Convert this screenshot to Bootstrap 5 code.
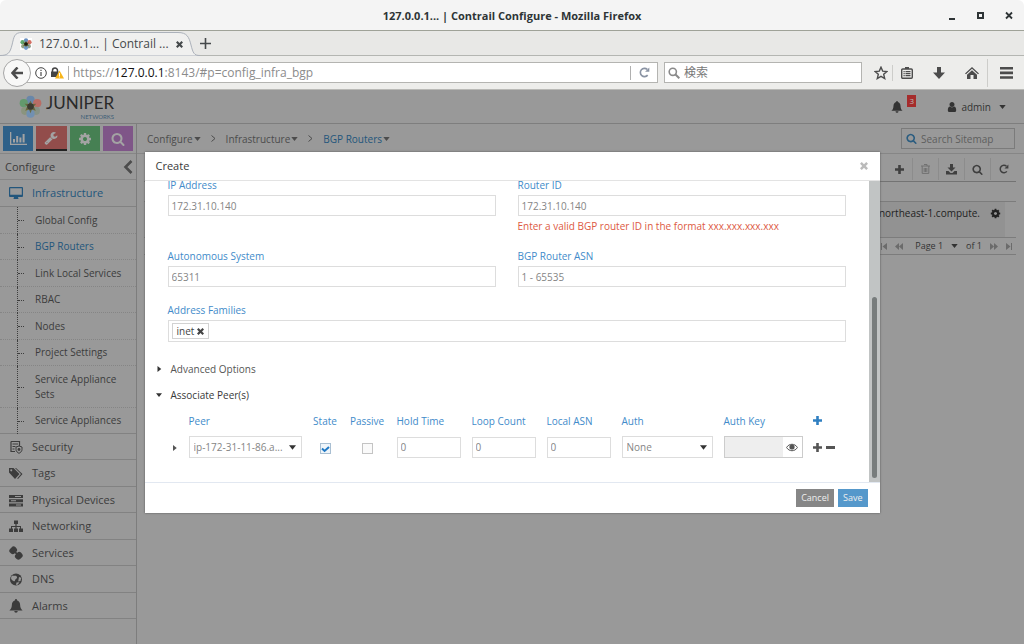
<!DOCTYPE html>
<html lang="en">
<head>
<meta charset="utf-8">
<meta name="viewport" content="width=device-width, initial-scale=1">
<title>127.0.0.1... | Contrail Configure - Mozilla Firefox</title>
<link href="https://cdn.jsdelivr.net/npm/bootstrap@5.3.0/dist/css/bootstrap.min.css" rel="stylesheet">
<style>
:root { --ui: "Open Sans", "Noto Sans", sans-serif; --chrome: "Open Sans", "Noto Sans CJK JP", sans-serif; --blue: #428bca; }
body { font: 10px/16px var(--ui); color: #3c3c3c; background: #fff; }
button, input, select { font: inherit; color: inherit; }
.plain-btn { border: 0; background: none; padding: 0; line-height: 1; display: inline-flex; align-items: center; justify-content: center; }
svg { display: block; flex: none; fill: currentColor; }
a { color: inherit; text-decoration: none; }

/* window and browser chrome */
.titlebar { height: 31px; background: #f4f4f4; border-bottom: 1px solid #9fa298; border-radius: 6px 6px 0 0; font: 700 11px/31px var(--chrome); color: #2e3436; display: grid; grid-template-columns: 1fr auto 1fr; }
.win-btns { gap: 17px; padding-right: 9px; }
.tabstrip { height: 25px; background: #e8e8e6; border-bottom: 1px solid #b4b6b2; font: 12px/16px var(--chrome); color: #45494b; }
.page-tab { width: 188px; height: 25px; margin-left: 4px; padding: 2px 14px 0 16px; gap: 7px; position: relative; }
.page-tab > .tab-shape { position: absolute; left: -4px; top: 0; z-index: 0; }
.page-tab > :not(.tab-shape) { position: relative; }
.toolrow { height: 34px; background: #ededeb; border-bottom: 1px solid #b9b9b6; padding: 0 11px 0 3px; font: 12px/16px var(--chrome); color: #4c4c4c; }
.back-btn { width: 28px; height: 28px; border: 1px solid #a5a5a5; border-radius: 50%; background: #f8f8f7; z-index: 1; }
.urlbox { height: 21px; margin-left: -6px; padding: 0 7px 0 9px; background: #fff; border: 1px solid #b4b4b1; }
.urlbox .divider { width: 1px; height: 14px; background: #b0b0b0; }
.address { color: #8b8b8b; white-space: nowrap; }
.address b { font-weight: 400; color: #111; }
.findbox { width: 198px; height: 21px; margin-left: 6px; padding-left: 3px; background: #fff; border: 1px solid #b4b4b1; color: #8a8a8a; }
.findbox input, .sitemap input { border: 0; background: none; outline: 0; padding: 0; min-width: 0; width: 100%; }
.findbox input::placeholder { color: #777; }
.bar-sep { width: 1px; height: 16px; background: #cdcdca; }

/* dimmed application */
.app { background: #999; position: relative; }
.apphead { height: 34px; border-bottom: 1px solid #7e7e7e; padding: 0 18px 0 19px; color: #333; }
.brand-name { font: 400 17px/20px Lato, sans-serif; color: #2a2a2a; }
.brand-sub { font: 400 6px/8px Lato, sans-serif; color: #3f5f78; }
.bell-btn { margin-right: 44px; }
.alert-count { position: absolute; left: 16px; top: -6px; background: #a52c2c; color: #bbb; font-size: 8px; line-height: 12px; padding: 0 2px; }
.side { width: 137px; border-right: 1px solid #7d7d7d; font-size: 11px; }
.switcher { height: 30px; padding: 2px 3px; gap: 3px; border-bottom: 1px solid #868686; }
.switcher button { flex: 1; height: 25px; color: #a3a3a3; }
.switcher .sw-b { background: #2f6189; } .switcher .sw-r { background: #924d4b; border-bottom: 2px solid #222; }
.switcher .sw-g { background: #468053; } .switcher .sw-p { background: #7f5688; }
.side-title { height: 26px; border-bottom: 1px solid #868686; padding: 0 3px 0 5px; }
.side-main { display: flex; align-items: center; height: 26px; border-bottom: 1px solid #828282; padding-left: 9px; gap: 9px; }
.side-main:nth-child(even), .side-title + .side-main { height: 27px; }
.side-main svg { width: 14px; height: 14px; }
.side-main.on { color: #23567c; }
.side-sub { position: relative; border-bottom: 1px dotted #858585; padding: 5px 8px 5px 35px; font-size: 10px; line-height: 15px; display: block; }
.side-sub:nth-child(odd) { padding-top: 6px; }
.side-sub::before { content: ""; position: absolute; left: 17px; top: 0; bottom: -1px; border-left: 1px dotted #3d3d3d; }
.side-sub::after { content: ""; position: absolute; left: 18px; top: 50%; width: 6px; border-top: 1px dotted #3d3d3d; }
.side-sub.on { color: #23567c; }
.side-sub:last-child { border-bottom: 1px solid #828282; }
.crumbs { height: 30px; border-bottom: 1px solid #868686; padding: 0 9px 0 10px; gap: 10px; color: #4c4c4c; }
.crumbs a { display: flex; align-items: center; gap: 1px; }
.crumbs .on span { color: #23567c; }
.sitemap { width: 114px; height: 21px; border: 1px solid #7b7b7b; padding: 0 4px; gap: 4px; }
.sitemap input::placeholder { color: #5e5e5e; opacity: 1; }
.panel-area { padding: 0 8px 0 7px; }
.grid-tools { height: 28px; border-bottom: 1px solid #737373; color: #3f3f3f; padding-top: 3px; }
.grid-tools button { width: 26px; height: 22px; border-left: 1px solid #8c8c8c; }
.grid-tools button:first-child { border: 0; }
.grid-gap { height: 20px; border-bottom: 1px solid #7c7c7c; }
.grid-line { height: 35px; margin-right: 11px; padding: 3px 4px 0 0; background: #929292; color: #222; gap: 10px; }
.pager { height: 18px; border-top: 1px solid #7c7c7c; border-bottom: 1px solid #7c7c7c; font-size: 9px; color: #333; gap: 8px; }

/* dialog */
.dlg-layer { position: absolute; left: 0; right: 0; top: 62px; z-index: 5; }
.dlg { max-width: 735px; margin: 0 auto; background: #fff; box-shadow: 0 0 2px #555; color: #555; }
.dlg-head { height: 29px; border-bottom: 1px solid #e3e3e3; padding: 0 12px 0 11px; color: #393939; font-size: 11px; }
.dlg-body { overflow: hidden; min-height: 301px; }
.dlg-form { margin-top: -4px; padding: 0 23px 0 23px; flex: 1; min-width: 0; }
.two-up { display: grid; grid-template-columns: 1fr 1fr; column-gap: 22px; margin-bottom: 15px; }
.dlg label { color: var(--blue); display: block; }
.two-up label, .wide label { margin-bottom: 2px; }
.wide { margin-bottom: 14px; }
.fld { display: block; width: 100%; height: 21px; border: 1px solid #ddd; border-radius: 0; background: #fff; padding: 0 3px; color: #858585; outline: 0; }
.err { color: #dd5a43; margin-top: 4px; line-height: 13px; }
.tagbox { height: 22px; border: 1px solid #ddd; padding: 0 3px; }
.chip { border: 1px solid #d2d2d2; height: 16px; line-height: 14px; padding: 0 4px; gap: 3px; color: #444; }
.fold { display: flex; align-items: center; height: 26px; margin-left: -12px; gap: 9px; border: 0; background: none; padding: 0; }
.fold svg { width: 6px; height: 6px; color: #333; }
.peers { table-layout: fixed; width: 100%; border-collapse: collapse; }
.peers th { height: 26px; padding: 0; font-weight: 400; white-space: nowrap; }
.peers td { height: 26px; padding: 0; }
.peers .mid { text-align: center; padding-right: 12px; }
.peers .fld { width: calc(100% - 11px); }
.peers select.fld { appearance: none; height: 22px; padding: 0 16px 0 4px; background: #fff url("data:image/svg+xml,%3Csvg xmlns='http://www.w3.org/2000/svg' viewBox='0 0 8 5'%3E%3Cpath d='M0 0h8L4 5z' fill='%23333'/%3E%3C/svg%3E") no-repeat right 5px center / 7px 5px; text-overflow: ellipsis; }
.tick { appearance: none; width: 11px; height: 11px; border: 1px solid #c4c4c4; background: #fafafa; margin: 0; display: inline-block; vertical-align: middle; }
.tick:checked { border-color: #a9bfd2; background: #eff5fa url("data:image/svg+xml,%3Csvg xmlns='http://www.w3.org/2000/svg' viewBox='0 0 9 9'%3E%3Cpath d='M1 4.5 3.6 7 8 3' fill='none' stroke='%231f78c4' stroke-width='2'/%3E%3C/svg%3E") center / 9px 9px; }
.keybox { height: 22px; border: 1px solid #ccc; margin-right: 10px; }
.keybox input { border: 0; background: #eee; width: 58px; height: 20px; outline: 0; }
.scroll-track { width: 11px; background: #c1c4c4; padding: 116px 3px 4px; }
.scroll-thumb { width: 5px; flex: 1; border-radius: 3px; background: #777c7c; }
.dlg-foot { border-top: 1px solid #e2e8f1; height: 31px; padding: 0 12px; gap: 4px; }
.act { border: 0; border-radius: 0; color: #eee; background: #868686; font-size: 9px; line-height: 18px; height: 18px; padding: 0 5px; }
.act.go { background: #5598cb; }
</style>
</head>
<body class="d-flex flex-column min-vh-100">
<svg class="d-none">
  <symbol id="cog" viewBox="0 0 1792 1792"><path d="M1152 896q0-106-75-181t-181-75-181 75-75 181 75 181 181 75 181-75 75-181zm512-109v222q0 12-8 23t-20 13l-185 28q-19 54-39 91 35 50 107 138 10 12 10 25t-9 23q-27 37-99 108t-94 71q-12 0-26-9l-138-108q-44 23-91 38-16 136-29 186-7 28-36 28h-222q-14 0-24.5-8.5t-11.5-21.5l-28-184q-49-16-90-37l-141 107q-10 9-25 9-14 0-25-11-126-114-165-168-7-10-7-23 0-12 8-23 15-21 51-66.5t54-70.5q-27-50-41-99l-183-27q-13-2-21-12.5t-8-23.5v-222q0-12 8-23t19-13l186-28q14-46 39-92-40-57-107-138-10-12-10-24 0-10 9-23 26-36 98.5-107.5t94.5-71.5q13 0 26 10l138 107q44-23 91-38 16-136 29-186 7-28 36-28h222q14 0 24.5 8.5t11.5 21.5l28 184q49 16 90 37l142-107q9-9 24-9 13 0 25 10 129 119 165 170 7 8 7 22 0 12-8 23-15 21-51 66.5t-54 70.5q26 50 41 98l183 28q13 2 21 12.5t8 23.5z"/></symbol>
  <symbol id="find" viewBox="0 0 1792 1792"><path d="M1216 832q0-185-131.5-316.5t-316.5-131.5-316.5 131.5-131.5 316.5 131.5 316.5 316.5 131.5 316.5-131.5 131.5-316.5zm512 832q0 52-38 90t-90 38q-54 0-90-38l-343-342q-179 124-399 124-143 0-273.5-55.5t-225-150-150-225-55.5-273.5 55.5-273.5 150-225 225-150 273.5-55.5 273.5 55.5 225 150 150 225 55.5 273.5q0 220-124 399l343 343q37 37 37 90z"/></symbol>
  <symbol id="wrench" viewBox="0 0 1792 1792"><path d="M448 1472q0-26-19-45t-45-19-45 19-19 45 19 45 45 19 45-19 19-45zm644-420l-682 682q-37 37-90 37-52 0-91-37l-106-108q-38-36-38-90 0-53 38-91l681-681q39 98 114.5 173.5t173.5 114.5zm634-435q0 39-23 106-47 134-164.5 217.5t-258.5 83.5q-185 0-316.5-131.5t-131.5-316.5 131.5-316.5 316.5-131.5q58 0 121.5 16.5t107.5 46.5q16 11 16 28t-16 28l-293 169v224l193 107q5-3 79-48.5t135.5-81 70.5-35.5q15 0 23.5 10t8.5 25z"/></symbol>
  <symbol id="user" viewBox="128 0 1536 1792"><path d="M1536 1399q0 109-62.500 187t-150.500 78h-854q-88 0-150.500-78t-62.500-187q0-85 8.500-160.500t31.500-152 58.500-131 94-89 134.500-34.500q131 128 313 128t313-128q76 0 134.500 34.500t94 89 58.500 131 31.500 152 8.500 160.500zm-256-887q0 159-112.500 271.500t-271.500 112.500-271.500-112.500-112.500-271.500 112.500-271.500 271.500-112.500 271.500 112.500 112.500 271.500z"/></symbol>
  <symbol id="bell" viewBox="0 0 16 16"><path d="M8 0a1 1 0 0 1 1 1.300C11.500 2 12.600 4 12.700 6.500c.1 3 .8 4.800 2.800 6.500H.5c2-1.700 2.700-3.500 2.800-6.500C3.400 4 4.500 2 7 1.300A1 1 0 0 1 8 0zM6 13.800h4a2 2 0 0 1-4 0z"/></symbol>
  <symbol id="down" viewBox="0 0 8 5"><path d="M0 0h8L4 5z"/></symbol>
  <symbol id="right" viewBox="0 0 6 8"><path d="M1 0v8l5-4z"/></symbol>
  <symbol id="plus" viewBox="0 0 9 9"><path d="M3.200 0h2.600v3.200H9v2.600H5.800V9H3.200V5.800H0V3.200h3.200z"/></symbol>
  <symbol id="cross" viewBox="0 0 10 10"><path d="M0 2.200 2.200 0 5 2.800 7.800 0 10 2.200 7.200 5 10 7.800 7.800 10 5 7.200 2.200 10 0 7.800 2.800 5z"/></symbol>
  <symbol id="reload" viewBox="0 0 16 16"><path d="M12.600 11.800A6 6 0 1 1 12 3.500" fill="none" stroke="currentColor" stroke-width="2.400"/><path d="M15 .8v6.200H8.800z"/></symbol>
  <symbol id="flower" viewBox="0 0 24 24"><g opacity=".85"><circle cx="12" cy="5" r="4.300" fill="#4f7db4"/><circle cx="19" cy="8.500" r="4.300" fill="#cc5648"/><circle cx="5" cy="8.500" r="4.300" fill="#459a56"/><ellipse cx="17.800" cy="16.500" rx="4" ry="4.300" fill="#7d8f7c"/><ellipse cx="6.200" cy="16.500" rx="4" ry="4.300" fill="#83936f"/><circle cx="12" cy="19.500" r="4.300" fill="#5b8bc0"/></g><path d="M12 6l1.800 3.500 4.200-.5-2.500 3 2 4.500-4-1.500L12 19l-1.500-4-4 1.500 2-4.500L6 9l4.200.5z" fill="#5a5a22"/><circle cx="12" cy="12" r="3.400" fill="#1e1c10"/></symbol>
</svg>

<header class="titlebar">
  <span></span><span>127.0.0.1... | Contrail Configure - Mozilla Firefox</span>
  <div class="win-btns d-flex justify-content-end align-items-center">
    <button class="plain-btn" aria-label="Minimize"><svg width="11" height="9"><path d="M2 7h6v2H2z"/></svg></button>
    <button class="plain-btn" aria-label="Maximize"><svg width="12" height="9"><path d="M2 1h7v7H2zM4 3v3h3V3z" fill-rule="evenodd"/></svg></button>
    <button class="plain-btn" aria-label="Close"><svg width="11" height="9"><path d="M2 1.500l6 6M8 1.500l-6 6" stroke="currentColor" stroke-width="1.800"/></svg></button>
  </div>
</header>

<div class="tabstrip d-flex align-items-center">
  <div class="page-tab d-flex align-items-center">
    <svg class="tab-shape" width="200" height="25"><path d="M0 24.500C8 24.500 10 22 12 14S14 1.500 22 1.500H178C187 1.500 189 6 191 14S194 24.500 200 24.500V25H0z" fill="#f0f0ef" stroke="#abb1ba"/></svg>
    <svg width="12" height="12"><rect width="12" height="12" fill="#fff"/><use href="#flower" width="12" height="12"/></svg>
    <span class="flex-grow-1 text-nowrap">127.0.0.1... | Contrail ...</span>
    <button class="plain-btn" aria-label="Close tab"><svg width="7" height="7"><use href="#cross"/></svg></button>
  </div>
  <button class="plain-btn ms-2" aria-label="New tab"><svg width="11" height="11"><path d="M5.500 0v11M0 5.500h11" stroke="currentColor" stroke-width="1.600"/></svg></button>
</div>

<div class="toolrow d-flex align-items-center">
  <button class="plain-btn back-btn" aria-label="Back"><svg width="12" height="12" viewBox="0 0 12 12"><path d="M6.500.5 1.500 6l5 5.500M2 6h10" fill="none" stroke="currentColor" stroke-width="2.600"/></svg></button>
  <div class="urlbox d-flex align-items-center flex-grow-1">
    <svg width="12" height="12" viewBox="0 0 12 12"><circle cx="6" cy="6" r="5.300" fill="none" stroke="#444"/><path d="M5.400 5h1.200v4H5.400zM5.400 2.800h1.200V4H5.400z"/></svg>
    <svg class="ms-1" width="13" height="12" viewBox="0 0 13 12"><path d="M1.500 5V3.500a2.500 2.500 0 0 1 5 0V5" fill="none" stroke="#444" stroke-width="1.500"/><path d="M0 4.500h7.500V10H0z" fill="#444"/><path d="M8.500 3.500 13 11.500H4z" fill="#f7b51b"/><path d="M8 6h1v3H8zM8 9.600h1v1H8z" fill="#fff"/></svg>
    <span class="divider ms-1 me-1"></span>
    <span class="address flex-grow-1">https://<b>127.0.0.1</b>:8143/#p=config_infra_bgp</span>
    <span class="divider me-2"></span>
    <button class="plain-btn" aria-label="Reload" style="color:#8a93a3"><svg width="11" height="11"><use href="#reload"/></svg></button>
  </div>
  <div class="findbox d-flex align-items-center gap-1">
    <svg width="12" height="12" viewBox="0 0 12 12"><circle cx="4.800" cy="4.800" r="3.600" fill="none" stroke="currentColor" stroke-width="1.600"/><path d="M7.500 7.500 11.300 11.300" stroke="currentColor" stroke-width="2"/></svg>
    <input type="search" placeholder="検索" aria-label="検索">
  </div>
  <button class="plain-btn ms-2 ps-1" aria-label="Bookmark"><svg width="14" height="14" viewBox="0 0 14 14"><path d="M7 1.200 8.700 5.100l4.200.4-3.200 2.800 1 4.200L7 10.300 3.300 12.500l1-4.200L1.100 5.500l4.200-.4z" fill="none" stroke="currentColor" stroke-width="1.400"/></svg></button>
  <span class="bar-sep ms-1 me-2"></span>
  <button class="plain-btn" aria-label="Bookmark list"><svg width="12" height="12" viewBox="0 0 12 12"><path d="M4 0h4v2H4z"/><rect x=".7" y="2" width="10.600" height="9.300" rx="1" fill="none" stroke="currentColor" stroke-width="1.400"/><path d="M2.500 4h1.200v1.200H2.500zm2 0h5v1.200h-5zm-2 2h1.200v1.200H2.500zm2 0h5v1.200h-5zm-2 2h1.200v1.200H2.500zm2 0h5v1.200h-5z"/></svg></button>
  <button class="plain-btn ms-3 px-1" aria-label="Downloads"><svg width="12" height="12" viewBox="0 0 12 12"><path d="M4 0h4v5.500h4L6 12 0 5.500h4z"/></svg></button>
  <button class="plain-btn ms-3" aria-label="Home"><svg width="14" height="12" viewBox="0 0 14 12"><path d="M7 0l7 6.500-1 .8-6-5.500-6 5.500-1-.8zM2 7.800 7 3.200l5 4.600V12H8.500V8h-3v4H2z"/></svg></button>
  <span class="bar-sep ms-2 me-1" style="height:28px"></span>
  <button class="plain-btn ms-2" aria-label="Menu"><svg width="13" height="12"><path d="M0 0h13v2.600H0zm0 4.600h13v2.600H0zm0 4.600h13v2.600H0z"/></svg></button>
</div>

<div class="app flex-grow-1 d-flex flex-column">
  <div class="apphead d-flex align-items-center">
    <svg width="23" height="23" style="opacity:.75"><use href="#flower"/></svg>
    <div class="ms-1 d-flex flex-column align-items-end"><span class="brand-name">JUNIPER</span><span class="brand-sub">NETWORKS</span></div>
    <div class="ms-auto d-flex align-items-center">
      <button class="plain-btn position-relative bell-btn" aria-label="Alerts"><svg width="12" height="12"><use href="#bell"/></svg><span class="alert-count">3</span></button>
      <button class="plain-btn gap-1" style="line-height:16px"><svg width="10" height="12"><use href="#user"/></svg>admin<svg class="ms-1" width="7" height="4"><use href="#down"/></svg></button>
    </div>
  </div>
  <div class="d-flex flex-grow-1">
    <nav class="side">
      <div class="switcher d-flex">
        <button class="plain-btn sw-b" aria-label="Monitor"><svg width="17" height="13" viewBox="0 0 17 13"><path d="M0 0h1.300v11.700H17V13H0zM3 7h2v3.500H3zm3.200-3h2v6.500h-2zm3.200 1.500h2v5h-2zM12.600 2h2v8.500h-2z"/></svg></button>
        <button class="plain-btn sw-r" aria-label="Configure"><svg width="14" height="14"><use href="#wrench"/></svg></button>
        <button class="plain-btn sw-g" aria-label="Settings"><svg width="14" height="14"><use href="#cog"/></svg></button>
        <button class="plain-btn sw-p" aria-label="Query"><svg width="14" height="14"><use href="#find"/></svg></button>
      </div>
      <div class="side-title d-flex align-items-center justify-content-between"><span>Configure</span><button class="plain-btn" aria-label="Collapse"><svg width="10" height="14" viewBox="0 0 10 14"><path d="M8.500 1 2.500 7l6 6" fill="none" stroke="#4c4c4c" stroke-width="2.600"/></svg></button></div>
      <a class="side-main on" href="#"><svg viewBox="0 0 14 14"><path d="M1 1h12a1 1 0 0 1 1 1v8a1 1 0 0 1-1 1H9l.5 2h-5L5 11H1a1 1 0 0 1-1-1V2a1 1 0 0 1 1-1zm.2 1.200v6.500h11.600V2.200z" fill-rule="evenodd"/></svg>Infrastructure</a>
      <div>
        <a class="side-sub" href="#">Global Config</a><a class="side-sub on" href="#">BGP Routers</a><a class="side-sub" href="#">Link Local Services</a><a class="side-sub" href="#">RBAC</a><a class="side-sub" href="#">Nodes</a><a class="side-sub" href="#">Project Settings</a><a class="side-sub" href="#">Service Appliance Sets</a><a class="side-sub" href="#">Service Appliances</a>
      </div>
      <div>
        <a class="side-main" href="#"><svg viewBox="0 0 14 14"><path d="M2 1.500h8.500V6M2 1.500V11.500h4M3.500 4h5.500M3.500 6.500h3M3.500 9h2" fill="none" stroke="currentColor" stroke-width="1.200"/><path d="M10 6l3 1v2.500c0 2-1.500 3-3 3.800C8.500 12.500 7 11.500 7 9.500V7z" fill="none" stroke="currentColor"/><circle cx="10" cy="9.500" r="1.400"/></svg>Security</a>
        <a class="side-main" href="#"><svg viewBox="0 0 14 14"><path d="M0 2h4.500l6 6-4.500 5L0 6.500zm2.200 1.200a1 1 0 1 0 .1 0zM6 2h1l6.500 6-4.500 5-.8-.6L12 8z" fill-rule="evenodd"/></svg>Tags</a>
        <a class="side-main" href="#"><svg viewBox="0 0 14 14"><path d="M0 2h14v3H0zm0 4.200h14v3H0zm0 4.200h14v3H0z"/><path d="M6 3h6v1H6zM2 7.200h5v1H2zm5 4.200h5v1H7z" fill="#999"/></svg>Physical Devices</a>
        <a class="side-main" href="#"><svg viewBox="0 0 14 14"><path d="M5 1.500h4V5H7.600v2H12v2.500h2V13h-4V9.500h1V8H7.600v1.500H9V13H5V9.500h1.400V8H3v1.500h1V13H0V9.500h2V7h4.400V5H5z"/></svg>Networking</a>
        <a class="side-main" href="#"><svg viewBox="0 0 14 14" fill="none" stroke="currentColor" stroke-width="1.900"><path d="M3.500 1.800 1.700 3.600a1.600 1.600 0 0 0 0 2.200l1 .9a1.600 1.600 0 0 0 2.200 0L6.700 5a1.600 1.600 0 0 0 0-2.200l-1-1a1.600 1.600 0 0 0-2.200 0zM9.100 7.300 7.300 9.100a1.600 1.600 0 0 0 0 2.200l1 1a1.600 1.600 0 0 0 2.200 0l1.800-1.800a1.600 1.600 0 0 0 0-2.200l-1-1a1.600 1.600 0 0 0-2.200 0zM5.200 5.200l3.600 3.600"/></svg>Services</a>
        <a class="side-main" href="#"><svg viewBox="0 0 14 14"><circle cx="7" cy="7.500" r="6"/><path d="M3 3.500c2 .5 4.500-.3 5 1.500S6 7 6 8.500 4 9 3 8 1.500 5.500 3 3.500zM10 5l2.200.8L11.500 9l-2.300.5zM7.500 10.500l3-.2-2 2.500-1.500.2z" fill="#999"/></svg>DNS</a>
        <a class="side-main" href="#"><svg><use href="#bell"/></svg>Alarms</a>
      </div>
    </nav>
    <main class="flex-grow-1" style="min-width:0">
      <div class="crumbs d-flex align-items-center">
        <a href="#"><span>Configure</span><svg width="7" height="4"><use href="#down"/></svg></a><svg width="5" height="7" viewBox="0 0 5 7"><path d="M.5.5 4 3.500.5 6.500" fill="none" stroke="currentColor"/></svg>
        <a href="#"><span>Infrastructure</span><svg width="7" height="4"><use href="#down"/></svg></a><svg width="5" height="7" viewBox="0 0 5 7"><path d="M.5.5 4 3.500.5 6.500" fill="none" stroke="currentColor"/></svg>
        <a class="on" href="#"><span>BGP Routers</span><svg width="7" height="4"><use href="#down"/></svg></a>
        <div class="sitemap d-flex align-items-center ms-auto"><svg width="11" height="11" style="color:#2b5d80"><use href="#find"/></svg><input type="search" placeholder="Search Sitemap" aria-label="Search Sitemap"></div>
      </div>
      <div class="panel-area">
        <div class="grid-tools d-flex justify-content-end align-items-center">
          <button class="plain-btn" aria-label="Add"><svg width="9" height="9"><use href="#plus"/></svg></button>
          <button class="plain-btn" aria-label="Delete" style="color:#717171"><svg width="9" height="10" viewBox="0 0 9 10"><path d="M3 .5h3V2M0 2h9M1.200 2v7.400h6.600V2M3.200 4v4M4.500 4v4M5.800 4v4" fill="none" stroke="currentColor"/></svg></button>
          <button class="plain-btn" aria-label="Import"><svg width="11" height="11" viewBox="0 0 11 11"><path d="M4 0h3v3.500h2.500L5.500 7.500l-4-4H4zM0 7h2.500l2 2h2l2-2H11v3.500H0z"/></svg></button>
          <button class="plain-btn" aria-label="Search"><svg width="11" height="11"><use href="#find"/></svg></button>
          <button class="plain-btn" aria-label="Refresh"><svg width="10" height="10"><use href="#reload"/></svg></button>
        </div>
        <div class="grid-gap"></div>
        <div class="grid-line d-flex justify-content-end align-items-start"><span>northeast-1.compute.</span><button class="plain-btn" style="height:16px" aria-label="Row actions"><svg width="11" height="11"><use href="#cog"/></svg></button></div>
        <div class="pager d-flex justify-content-end align-items-center">
          <svg width="6" height="7" viewBox="0 0 6 7" style="color:#6b6b6b"><path d="M0 0h1v7H0zM6 0v7L1.500 3.500z"/></svg>
          <svg width="8" height="7" viewBox="0 0 8 7" style="color:#6b6b6b"><path d="M4 0v7L0 3.500zM8 0v7L4 3.500z"/></svg>
          <span class="ms-1">Page 1</span><svg width="7" height="4"><use href="#down"/></svg><span>of 1</span>
          <svg width="8" height="7" viewBox="0 0 8 7" style="color:#6b6b6b"><path d="M0 0v7l4-3.500zM4 0v7l4-3.500z"/></svg>
          <svg class="me-1" width="6" height="7" viewBox="0 0 6 7" style="color:#6b6b6b"><path d="M5 0h1v7H5zM0 0v7l4.500-3.500z"/></svg>
        </div>
      </div>
    </main>
  </div>

  <div class="dlg-layer">
    <section class="dlg" role="dialog" aria-label="Create">
      <div class="dlg-head d-flex align-items-center justify-content-between"><span>Create</span><button class="plain-btn" aria-label="Close" style="color:#bbb"><svg width="8" height="8"><use href="#cross"/></svg></button></div>
      <div class="dlg-body d-flex">
        <form class="dlg-form">
          <div class="two-up">
            <div><label for="ip">IP Address</label><input class="fld" id="ip" value="172.31.10.140"></div>
            <div><label for="rid">Router ID</label><input class="fld" id="rid" value="172.31.10.140"><div class="err">Enter a valid BGP router ID in the format xxx.xxx.xxx.xxx</div></div>
          </div>
          <div class="two-up">
            <div><label for="as">Autonomous System</label><input class="fld" id="as" value="65311"></div>
            <div><label for="asn">BGP Router ASN</label><input class="fld" id="asn" value="1 - 65535"></div>
          </div>
          <div class="wide">
            <label id="fam">Address Families</label>
            <div class="tagbox d-flex align-items-center" role="group" aria-labelledby="fam"><span class="chip d-flex align-items-center">inet<button type="button" class="plain-btn" aria-label="Remove inet"><svg width="7" height="7"><use href="#cross"/></svg></button></span></div>
          </div>
          <button type="button" class="fold"><svg><use href="#right"/></svg>Advanced Options</button>
          <button type="button" class="fold" style="color:#393939"><svg><use href="#down"/></svg>Associate Peer(s)</button>
          <table class="peers">
            <colgroup><col style="width:21px"><col style="width:124px"><col style="width:37px"><col style="width:47px"><col style="width:75px"><col style="width:75px"><col style="width:75px"><col style="width:102px"><col style="width:89px"><col></colgroup>
            <thead><tr><th></th><th><label for="p1">Peer</label></th><th class="mid"><label for="p2">State</label></th><th class="mid"><label for="p3">Passive</label></th><th><label for="p4">Hold Time</label></th><th><label for="p5">Loop Count</label></th><th><label for="p6">Local ASN</label></th><th><label for="p7">Auth</label></th><th><label for="p8">Auth Key</label></th><th><button type="button" class="plain-btn" aria-label="Add peer" style="color:#2f7fc1"><svg width="9" height="9"><use href="#plus"/></svg></button></th></tr></thead>
            <tbody><tr>
              <td><button type="button" class="plain-btn ps-1" aria-label="Expand"><svg width="5" height="6"><use href="#right"/></svg></button></td>
              <td><select class="fld" id="p1"><option>ip-172-31-11-86.a...</option></select></td>
              <td class="mid"><input class="tick" type="checkbox" id="p2" checked></td>
              <td class="mid"><input class="tick" type="checkbox" id="p3"></td>
              <td><input class="fld" id="p4" value="0"></td>
              <td><input class="fld" id="p5" value="0"></td>
              <td><input class="fld" id="p6" value="0"></td>
              <td><select class="fld" id="p7"><option>None</option></select></td>
              <td><div class="keybox d-flex align-items-center justify-content-between"><input id="p8" type="password" disabled><button type="button" class="plain-btn pe-1" aria-label="Show key"><svg width="12" height="9" viewBox="0 0 12 9"><path d="M.6 4.500C3 .2 9 .2 11.400 4.500 9 8.800 3 8.800.6 4.500z" fill="none" stroke="currentColor"/><circle cx="6" cy="4" r="2.600"/></svg></button></div></td>
              <td><div class="d-flex align-items-center"><button type="button" class="plain-btn me-1" aria-label="Add"><svg width="9" height="9"><use href="#plus"/></svg></button><button type="button" class="plain-btn" aria-label="Remove"><svg width="9" height="3"><path d="M0 0h9v3H0z"/></svg></button></div></td>
            </tr></tbody>
          </table>
        </form>
        <div class="scroll-track d-flex flex-column"><div class="scroll-thumb"></div></div>
      </div>
      <div class="dlg-foot d-flex align-items-center justify-content-end"><button class="act">Cancel</button><button class="act go">Save</button></div>
    </section>
  </div>
</div>
<script src="https://cdn.jsdelivr.net/npm/bootstrap@5.3.0/dist/js/bootstrap.bundle.min.js"></script>
</body>
</html>
